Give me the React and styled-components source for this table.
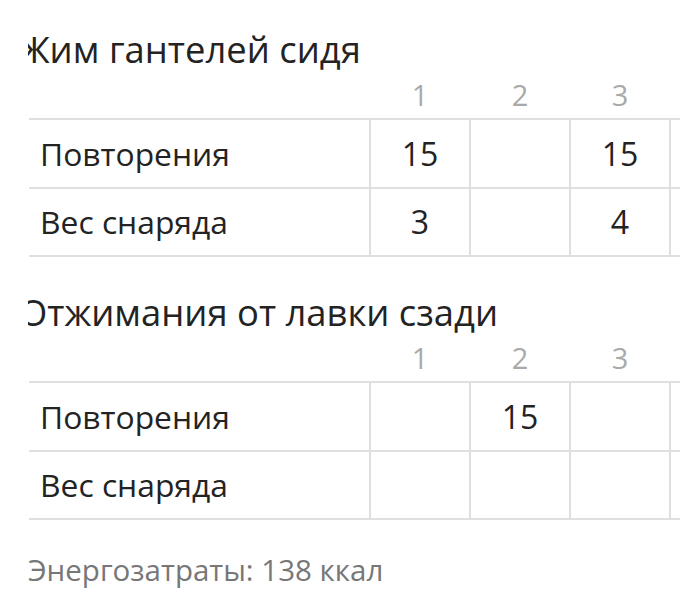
import React from "react";
import styled, { createGlobalStyle } from "styled-components";

const Global = createGlobalStyle`
  html, body { margin: 0; padding: 0; background: #fff; }
  body { font-family: "Open Sans", "Noto Sans", sans-serif; color: #222; }
`;

const Page = styled.div`
  width: 652px;
  margin-left: 28px;
  overflow: hidden;
  padding-top: 27px;
  height: 589px;
`;

const Exercise = styled.section`
  & + & { margin-top: 33px; }
`;

const Title = styled.h2`
  margin: 0 0 0 -9px;
  font-size: 36.4px;
  font-weight: 400;
  line-height: 44px;
  white-space: nowrap;
  color: #232323;
`;

const Table = styled.table`
  border-collapse: collapse;
  table-layout: fixed;
  margin-left: 1px;
  width: 741px;
`;

const HeadCell = styled.th`
  height: 47px;
  padding: 0;
  font-weight: 400;
  font-size: 29px;
  color: #a9a9a9;
  text-align: center;
  vertical-align: middle;
  width: ${(p) => (p.$label ? "341px" : "100px")};
`;

const Row = styled.tr`
  border-top: 2px solid #dfdfdf;
  border-bottom: 2px solid #dfdfdf;
`;

const LabelCell = styled.td`
  height: 66.5px;
  padding: 0 0 0 11px;
  font-size: 31.8px;
  color: #232323;
  white-space: nowrap;
  vertical-align: middle;
`;

const ValueCell = styled.td`
  height: 66.5px;
  padding: 0;
  font-size: 32px;
  color: #232323;
  text-align: center;
  vertical-align: middle;
  border-left: 2px solid #dfdfdf;
`;

const Energy = styled.p`
  margin: 32px 0 0 0;
  font-size: 29.5px;
  line-height: 36px;
  color: #777;
`;

const columns = ["1", "2", "3", ""];

const data = [
  {
    title: "Жим гантелей сидя",
    rows: [
      { label: "Повторения", values: ["15", "", "15", ""] },
      { label: "Вес снаряда", values: ["3", "", "4", ""] },
    ],
  },
  {
    title: "Отжимания от лавки сзади",
    rows: [
      { label: "Повторения", values: ["", "15", "", ""] },
      { label: "Вес снаряда", values: ["", "", "", ""] },
    ],
  },
];

export default function App() {
  return (
    <>
      <Global />
      <Page>
        {data.map((ex) => (
          <Exercise key={ex.title}>
            <Title>{ex.title}</Title>
            <Table>
              <thead>
                <tr>
                  <HeadCell $label />
                  {columns.map((c, i) => (
                    <HeadCell key={i}>{c}</HeadCell>
                  ))}
                </tr>
              </thead>
              <tbody>
                {ex.rows.map((r) => (
                  <Row key={r.label}>
                    <LabelCell>{r.label}</LabelCell>
                    {r.values.map((v, i) => (
                      <ValueCell key={i}>{v}</ValueCell>
                    ))}
                  </Row>
                ))}
              </tbody>
            </Table>
          </Exercise>
        ))}
        <Energy>Энергозатраты: 138 ккал</Energy>
      </Page>
    </>
  );
}
